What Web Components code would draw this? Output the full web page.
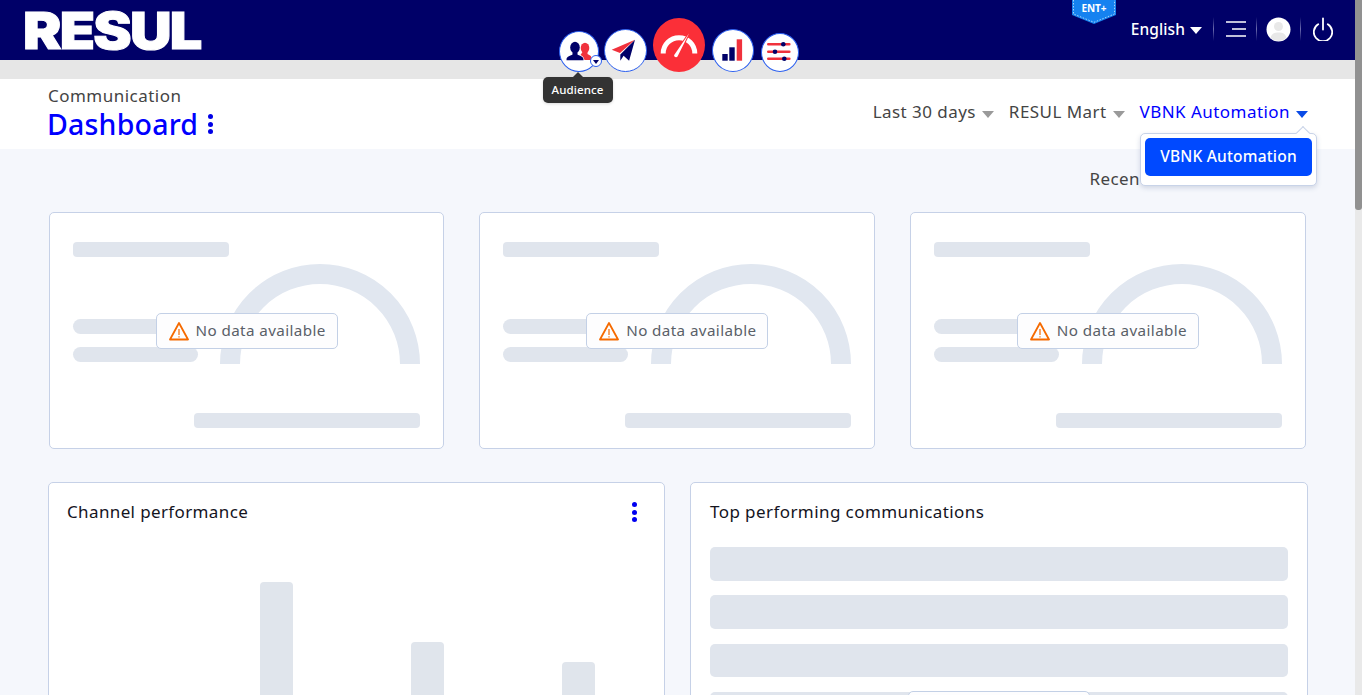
<!DOCTYPE html>
<html lang="en">
<head>
<meta charset="utf-8">
<title>Dashboard</title>
<style>
html,body{margin:0;padding:0;height:695px;overflow:hidden;background:#f5f7fc;font-family:"Noto Sans","Liberation Sans",sans-serif;}
</style>
</head>
<body>
<x-app></x-app>
<script>
function def(name, html){
  customElements.define(name, class extends HTMLElement{
    constructor(){super();this.attachShadow({mode:'open'}).innerHTML=typeof html==='function'?html(this):html;}
  });
}
const GREY='#e0e5ed';

def('x-scrollbar',`<style>:host{display:block;width:7px;height:695px;background:#e9e9e9;flex:none}
.t{height:210px;background:#919191;border-radius:0 0 3px 3px}</style><div class="t"></div>`);

def('x-app-header',`<style>
:host{display:flex;align-items:center;justify-content:space-between;height:60px;background:#000068;padding:0 22px 0 23px;position:relative;color:#fff}
.logo{font:900 51.5px/60px Inter,"Liberation Sans",sans-serif;letter-spacing:-1.6px;-webkit-text-stroke:1px #fff;margin-top:-1px;transform:scaleX(1.12);transform-origin:left center}
.r{display:flex;align-items:center;height:60px;margin-top:-2px}
.lang{font:500 15.5px/20px "Noto Sans",sans-serif;letter-spacing:.1px;display:flex;align-items:center;gap:5px}
.c{width:0;height:0;border:6px solid transparent;border-top:7px solid #fff;border-bottom:0;margin-top:3px}
.s{width:1px;height:24px;background:linear-gradient(180deg,transparent,#6d6daf 50%,transparent);}
.ic{display:block}
.ent{position:absolute;left:1072px;top:0;width:44px;height:24px}
.ent b{position:absolute;left:0;right:0;top:1px;text-align:center;font:700 10px/14px "Noto Sans",sans-serif;color:#fff}
</style>
<div class="logo">RESUL</div>
<div class="r">
  <div class="lang">English<span class="c"></span></div>
  <span class="s" style="margin-left:11px"></span>
  <svg class="ic" style="margin:0 10px 0 12px" width="20" height="18" viewBox="0 0 20 18"><path d="M0 2h20M6 9h14M0 16h20" stroke="#fff" stroke-width="1.6"/></svg>
  <span class="s"></span>
  <svg class="ic" style="margin:0 9px 0 9px" width="25" height="25" viewBox="0 0 25 25"><circle cx="12.500" cy="12.500" r="12" fill="#fff"/><circle cx="12.500" cy="9.500" r="4.500" fill="#e8e8e8"/><path d="M4.500 21c1-4.500 4-5.500 8-5.500s7 1 8 5.500a12 12 0 0 1-16 0z" fill="#e8e8e8"/></svg>
  <span class="s"></span>
  <svg class="ic" style="margin-left:12px" width="20" height="24" viewBox="0 0 20 24"><path d="M5.200 7.200a9.200 9.200 0 1 0 9.600 0" fill="none" stroke="#fff" stroke-width="1.800" stroke-linecap="round"/><path d="M10 1.500v11" stroke="#fff" stroke-width="1.800" stroke-linecap="round"/></svg>
</div>
<div class="ent">
  <svg width="44" height="24" viewBox="0 0 44 24"><path d="M0 0h44v15L22 24 0 15z" fill="#1582f0"/><path d="M1.500 0v14l20.500 8.300L42.500 14V0" fill="none" stroke="#a7d4fb" stroke-dasharray="1.500 1.500"/></svg>
  <b>ENT+</b>
</div>`);

def('x-nav-icons',`<style>
:host{position:absolute;left:559px;top:18px;display:flex;align-items:flex-end;height:54px}
.b{box-sizing:border-box;border-radius:50%;background:#fff;border:1.500px solid #2b5fef;position:relative;flex:none}
svg{position:absolute;left:-1.500px;top:-1.500px;display:block}
.caret{position:absolute;left:30px;top:23px;width:12px;height:12px;box-sizing:border-box;border:1px solid #2b5fef;border-radius:50%;background:#fff}
.caret i{position:absolute;left:2px;top:3.500px;border:3px solid transparent;border-top:4px solid #000068;border-bottom:0}
.tip{position:absolute;left:-17.500px;top:44.500px;width:70px;height:26px;background:#333;border-radius:5px;color:#fff;font:500 11.5px/26px "Noto Sans",sans-serif;letter-spacing:.1px;text-align:center;box-shadow:0 1px 3px rgba(0,0,0,.15)}
.tip:before{content:"";position:absolute;left:30px;top:-5px;border:5px solid transparent;border-bottom:5px solid #333;border-top:0}
</style>
<div class="b" style="width:40px;height:41px">
  <svg width="40" height="41" viewBox="0 0 40 41">
    <ellipse cx="26" cy="17" rx="4.300" ry="5.200" fill="#f0313c"/>
    <path d="M23.500 21h5v2c.8.9 4 1.300 4 4v2H25.500c-.6-2.800-2-4-4-5z" fill="#f0313c"/>
    <ellipse cx="16" cy="16.500" rx="4.800" ry="5.800" fill="#000068"/>
    <path d="M13.500 21h5v2.500c1.500 1.200 6 1.500 6 5v.8H7.500v-.8c0-3.500 4.500-3.800 6-5z" fill="#000068"/>
  </svg>
  <span class="caret"><i></i></span>
  <div class="tip">Audience</div>
</div>
<div class="b" style="width:43px;height:43px;margin-left:5px">
  <svg width="43" height="43" viewBox="0 0 43 43"><path d="M7.700 20.700 31 10.700 16 24z" fill="#f0313c"/><path d="M31 10.700 16.300 25.500v6.300l3.300-5 5.500 5z" fill="#000068"/></svg>
</div>
<div class="b" style="width:52px;height:54px;margin-left:6px;background:#fb2f38;border:0">
  <svg style="left:0;top:0" width="52" height="54" viewBox="0 0 52 54"><path d="M10.200 35.500a15.800 15.800 0 0 1 31.600 0" fill="none" stroke="#fff" stroke-width="5"/><path d="M36 15.500 24.500 38.500c-1 1.500-4 .5-3.300-1.500z" fill="#fff" stroke="#fb2f38" stroke-width="2" paint-order="stroke"/></svg>
</div>
<div class="b" style="width:42px;height:43px;margin-left:7px">
  <svg width="42" height="43" viewBox="0 0 42 43"><rect x="10.300" y="25" width="5.400" height="6.700" fill="#000068"/><rect x="17.300" y="18.300" width="5.400" height="13.400" fill="#000068"/><rect x="24.700" y="10.300" width="5.400" height="21.400" fill="#f0313c"/></svg>
</div>
<div class="b" style="width:38px;height:39px;margin-left:7px">
  <svg width="38" height="39" viewBox="0 0 38 39"><path d="M7.300 11.300h21M7.300 18.700h21M7.300 25.700h21" stroke="#f0313c" stroke-width="2.600" stroke-linecap="round"/><circle cx="22.300" cy="11.300" r="2.300" fill="#000068"/><circle cx="14" cy="18.700" r="2.300" fill="#000068"/><circle cx="23.300" cy="25.700" r="2.300" fill="#000068"/></svg>
</div>`);

def('x-filter',(h)=>`<style>
:host{display:flex;align-items:center;gap:6px;font:400 17px/24px "Noto Sans",sans-serif;letter-spacing:.45px;color:${h.hasAttribute('active')?'#0000ff':'#444'};white-space:nowrap}
i{border:6px solid transparent;border-top:7px solid ${h.hasAttribute('active')?'#0a4be6':'#9a9a9a'};border-bottom:0;margin-top:4px}
</style><slot></slot><i></i>`);

def('x-menu',`<style>
:host{position:absolute;right:38px;top:54px;width:177px;height:53px;box-sizing:border-box;background:#fff;border:1px solid #c8d3e8;border-radius:5px;padding:4px;box-shadow:0 2px 5px rgba(60,80,130,.2);z-index:3}
:host:before{content:"";position:absolute;right:8px;top:-6px;width:9px;height:9px;background:#fff;border:1px solid #c8d3e8;border-width:1px 0 0 1px;transform:rotate(45deg)}
.i{position:relative;height:38px;background:#0049ff;border-radius:5px;color:#fff;font:500 15.500px/37px "Noto Sans",sans-serif;letter-spacing:.2px;text-align:center}
</style><div class="i"><slot></slot></div>`);

def('x-title-bar',`<style>
:host{display:flex;justify-content:space-between;height:70px;background:#fff;padding:0 47px 0 48px;position:relative}
.sub{font:400 17px/20px "Noto Sans",sans-serif;color:#444;padding-top:7px;letter-spacing:.48px}
.t{font:500 28.500px/36px "Noto Sans",sans-serif;letter-spacing:.2px;color:#0000ff;display:flex;align-items:center;gap:10px;margin-left:-1px}
.d{display:flex;flex-direction:column;gap:2.500px}
.d i{width:5px;height:5px;border-radius:50%;background:#0000e6;display:block}
.f{display:flex;gap:15px;align-items:center;height:66px}
</style>
<div><div class="sub">Communication</div><div class="t">Dashboard<span class="d"><i></i><i></i><i></i></span></div></div>
<div class="f"><x-filter>Last 30 days</x-filter><x-filter>RESUL Mart</x-filter><x-filter active>VBNK Automation</x-filter></div>
<x-menu>VBNK Automation</x-menu>`);

def('x-no-data',`<style>
:host{position:absolute;left:50%;top:50%;transform:translate(-50%,-50%);box-sizing:border-box;height:36px;width:182px;display:flex;align-items:center;gap:7px;padding:0 0 2px 12px;background:#fdfdfe;border:1px solid #c3d0e6;border-radius:5px;font:400 15.200px/32px "Noto Sans",sans-serif;letter-spacing:.4px;color:#5a5f68;white-space:nowrap}
svg{display:block;flex:none;margin-top:2px}
</style>
<svg width="20" height="20" viewBox="0 0 20 20"><path d="M10 2 19 18.500H1z" fill="none" stroke="#f56a00" stroke-width="1.800" stroke-linejoin="round"/><path d="M10 8v6M10 15.200v1.300" stroke="#f56a00" stroke-width="1.200"/></svg>
No data available`);

def('x-kpi',`<style>
:host{display:block;box-sizing:border-box;height:237px;background:#fff;border:1px solid #c6d1e7;border-radius:5px;padding:29px 23px 20px;position:relative}
.b{background:${GREY};height:15px;border-radius:4px}
.m{display:flex;justify-content:space-between;align-items:flex-end;height:100px;margin-top:7px}
.l{display:flex;flex-direction:column;gap:13px;padding-bottom:2px}
.l .b{width:125px;border-radius:8px}
svg{display:block}
</style>
<div class="b" style="width:156px"></div>
<div class="m"><div class="l"><div class="b"></div><div class="b"></div></div>
<svg width="200" height="100" viewBox="0 0 200 100"><path d="M10 100a90 90 0 0 1 180 0" fill="none" stroke="#e1e7f0" stroke-width="20"/></svg></div>
<div class="b" style="width:226px;margin:49px 0 0 auto"></div>
<x-no-data></x-no-data>`);

def('x-chart-card',`<style>
:host{display:block;box-sizing:border-box;height:318px;background:#fff;border:1px solid #c6d1e7;border-radius:5px;padding:17px 19px 18px 18px;position:relative}
.h{display:flex;justify-content:space-between;align-items:center;height:24px;font:400 17px/24px "Noto Sans",sans-serif;letter-spacing:.37px;color:#14141e}
.d{display:flex;flex-direction:column;gap:2.500px;margin-right:8px}
.d i{width:5px;height:5px;border-radius:50%;background:#0000f0;display:block}
.c{display:flex;align-items:flex-end;height:218px;margin:58px 0 0 42px;gap:118px}
.c b{display:block;width:33px;background:#e0e5ec;border-radius:4px 4px 0 0}
</style>
<div class="h">Channel performance<span class="d"><i></i><i></i><i></i></span></div>
<div class="c"><b style="height:60px"></b><b style="height:218px"></b><b style="height:158px"></b><b style="height:138px"></b></div>`);

def('x-top-card',`<style>
:host{display:block;box-sizing:border-box;height:318px;background:#fff;border:1px solid #c6d1e7;border-radius:5px;padding:17px 19px 18px;position:relative}
.h{height:24px;font:400 17px/24px "Noto Sans",sans-serif;letter-spacing:.42px;color:#14141e}
.c{display:flex;flex-direction:column;gap:14.670px;margin-top:23px}
.c b{display:block;height:33.670px;background:${GREY};border-radius:5px}
x-no-data{top:226px}
</style>
<div class="h">Top performing communications</div>
<div class="c"><b></b><b></b><b></b><b></b><b></b></div>
<x-no-data></x-no-data>`);

def('x-content',`<style>
:host{display:block;padding:20px 47px 0 48px}
.rec{display:flex;justify-content:flex-end;padding-right:168px;font:400 17px/20px "Noto Sans",sans-serif;letter-spacing:.4px;color:#444;margin-bottom:23px}
.g1{display:grid;grid-template-columns:repeat(3,1fr);gap:35px;margin:0 2.300px 33px .7px}
.g2{display:grid;grid-template-columns:617px 618px;gap:25px}
</style>
<div class="rec">Recen</div>
<div class="g1"><x-kpi></x-kpi><x-kpi></x-kpi><x-kpi></x-kpi></div>
<div class="g2"><x-chart-card></x-chart-card><x-top-card></x-top-card></div>`);

def('x-app',`<style>
:host{display:flex;width:1362px;height:695px;overflow:hidden;position:relative}
.p{flex:1;min-width:0;position:relative}
.g{height:19px;background:#e6e6e6}
</style>
<div class="p"><x-app-header></x-app-header><div class="g"></div><x-title-bar></x-title-bar><x-content></x-content><x-nav-icons></x-nav-icons></div>
<x-scrollbar></x-scrollbar>`);
</script>
</body>
</html>
